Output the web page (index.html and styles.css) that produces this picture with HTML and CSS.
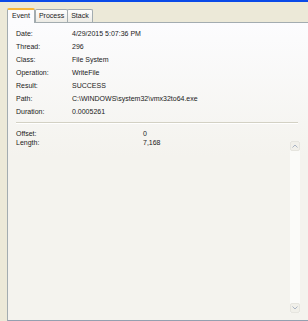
FILE: index.html
```html
<!DOCTYPE html>
<html lang="en">
<head>
  <meta charset="UTF-8">
  <link rel="stylesheet" href="styles.css">
  <title>Event Properties</title>
</head>
<body>
  <div class="titlebar"></div>

  <!-- tab strip -->
  <div class="tabs">
    <div class="tab active">Event</div>
    <div class="tab">Process</div>
    <div class="tab">Stack</div>
  </div>

  <div class="panel">
    <div class="details">
      <div class="label">Date:</div><div>4/29/2015 5:07:36 PM</div>
      <div class="label">Thread:</div><div>296</div>
      <div class="label">Class:</div><div>File System</div>
      <div class="label">Operation:</div><div>WriteFile</div>
      <div class="label">Result:</div><div>SUCCESS</div>
      <div class="label">Path:</div><div>C:\WINDOWS\system32\vmx32to64.exe</div>
      <div class="label">Duration:</div><div>0.0005261</div>
    </div>

    <div class="separator"></div>

    <div class="lower">
      <div class="props">
        <div>Offset:</div><div>0</div>
        <div>Length:</div><div>7,168</div>
      </div>
      <div class="scrollbar">
        <div class="sbtn">
          <svg width="6" height="4" viewBox="0 0 6 4"><path d="M0.5 3.5 L3 1 L5.5 3.5" fill="none" stroke="#a9b3c4" stroke-width="1"/></svg>
        </div>
        <div class="track"></div>
        <div class="sbtn">
          <svg width="6" height="4" viewBox="0 0 6 4"><path d="M0.5 0.5 L3 3 L5.5 0.5" fill="none" stroke="#a9b3c4" stroke-width="1"/></svg>
        </div>
      </div>
    </div>
  </div>
</body>
</html>
```

FILE: styles.css
```css
body {
  margin: 0;
  height: 321px;
  overflow: hidden;
  background: #ece9d8;
  font-family: "Liberation Sans", Arial, sans-serif;
  font-size: 7px;
  color: #1a1a1a;
  display: flex;
  flex-direction: column;
}

.titlebar {
  height: 2px;
  background: #0a4ae8;
}

.tabs {
  display: flex;
  align-items: flex-end;
  height: 20px;
  padding-left: 7px;
}

.tab {
  height: 12px;
  line-height: 12px;
  padding: 0 3px;
  margin-right: -1px;
  border: 1px solid #a3acb0;
  border-bottom: none;
  border-radius: 2px 2px 0 0;
  background: linear-gradient(#fefefe, #ecebe5);
  color: #222;
}

.tab.active {
  position: relative;
  z-index: 1;
  height: 13px;
  line-height: 12px;
  margin-bottom: -1px;
  margin-right: 0;
  padding: 0 4px;
  border-top: 2px solid #f7b83a;
  background: #fcfcfe;
}

.panel {
  flex: 1;
  display: flex;
  flex-direction: column;
  margin-left: 7px;
  border: 1px solid #a3acb0;
  border-right: none;
  border-bottom-color: #95a0b0;
  background: linear-gradient(#fcfcfe, #f4f3ee 45%, #f4f3ee);
}

.details {
  display: grid;
  grid-template-columns: 56px 1fr;
  grid-auto-rows: 13px;
  align-items: center;
  padding: 4px 0 0 8px;
}

.separator {
  height: 1px;
  margin: 4px 10px 0 8px;
  background: #d3d1c4;
  border-bottom: 1px solid #fff;
}

.lower {
  flex: 1;
  display: flex;
  padding: 5px 8px 7px 8px;
}

.props {
  flex: 1;
  display: grid;
  grid-template-columns: 127px 1fr;
  grid-auto-rows: 9px;
  align-content: start;
  align-items: center;
}

.scrollbar {
  width: 10px;
  margin-top: 12px;
  display: flex;
  flex-direction: column;
  background: #fbfbf9;
}

.track {
  flex: 1;
}

.sbtn {
  height: 10px;
  box-sizing: border-box;
  border: 1px solid #e6e5df;
  border-radius: 2px;
  background: #f1f0ea;
  display: flex;
  align-items: center;
  justify-content: center;
}
```
